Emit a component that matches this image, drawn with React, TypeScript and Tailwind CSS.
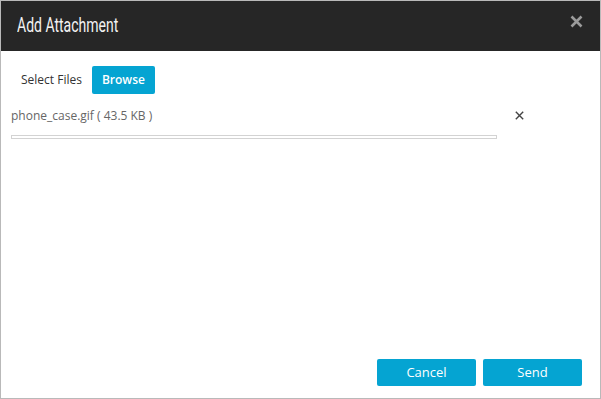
export default function App() {
  return (
    <div className="w-[601px] h-[399px] bg-white border border-[#b9b9b9] flex flex-col font-['Open_Sans',sans-serif]">
      <div className="h-[50px] shrink-0 bg-[#262626] flex items-center justify-between pl-[16px] pr-[17px]">
        <h1 className="inline-block origin-left scale-x-[0.7] text-[20px] leading-none text-[#f2f2f2] whitespace-nowrap font-['Roboto',sans-serif] font-normal -mt-[2px]">
          Add Attachment
        </h1>
        <button className="w-[14px] h-[14px] flex items-center justify-center -mt-[10px]" aria-label="Close">
          <svg width="13" height="13" viewBox="0 0 13 13">
            <path d="M1.5 1.5 L11.5 11.5 M11.5 1.5 L1.5 11.5" stroke="#9b9b9b" strokeWidth="2.6" strokeLinecap="butt" />
          </svg>
        </button>
      </div>

      <div className="flex-1 flex flex-col px-[10px] pt-[15px]">
        <div className="flex items-center gap-[10px] pl-[10px]">
          <span className="text-[12px] text-[#333333]">Select Files</span>
          <button className="w-[63px] h-[28px] rounded-[2px] bg-[#05a4d2] text-white text-[12px] font-semibold">
            Browse
          </button>
        </div>

        <div className="flex items-start mt-[13px]">
          <div className="w-[486px]">
            <div className="text-[12px] leading-[17px] text-[#666666]">phone_case.gif ( 43.5 KB )</div>
            <div className="mt-[11px] h-[4px] border border-[#d3d3d3] bg-white" />
          </div>
          <button className="ml-[17px] mt-[3px] w-[10px] h-[10px] flex items-center justify-center" aria-label="Remove">
            <svg width="9" height="9" viewBox="0 0 9 9">
              <path d="M0.8 0.8 L8.2 8.2 M8.2 0.8 L0.8 8.2" stroke="#444444" strokeWidth="1.4" />
            </svg>
          </button>
        </div>

        <div className="mt-auto flex justify-end gap-[7px] pr-[8px] pb-[12px]">
          <button className="w-[99px] h-[27px] rounded-[2px] bg-[#05a4d2] text-white text-[13px] font-medium">
            Cancel
          </button>
          <button className="w-[99px] h-[27px] rounded-[2px] bg-[#05a4d2] text-white text-[13px] font-medium">
            Send
          </button>
        </div>
      </div>
    </div>
  );
}
